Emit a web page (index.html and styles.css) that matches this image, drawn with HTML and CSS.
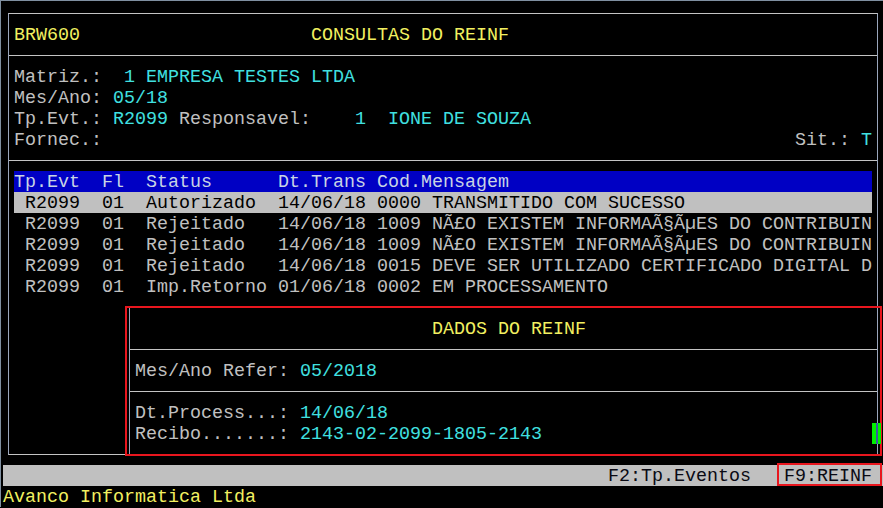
FILE: index.html
```html
<!DOCTYPE html>
<html lang="pt">
<head>
<meta charset="utf-8">
<title>BRW600 - Consultas do REINF</title>
<link rel="stylesheet" href="styles.css">
</head>
<body>
<div class="window">
  <div class="screen">
    <div class="box">
      <div class="ln"><span class="y">BRW600</span>                     <span class="y">CONSULTAS DO REINF</span></div>
      <div class="sep"></div>
      <div class="ln">Matriz.:  <span class="c">1 EMPRESA TESTES LTDA</span></div>
      <div class="ln">Mes/Ano: <span class="c">05/18</span></div>
      <div class="ln">Tp.Evt.: <span class="c">R2099</span> Responsavel:    <span class="c">1  IONE DE SOUZA</span></div>
      <div class="ln">Fornec.:                                                               Sit.: <span class="c">T</span></div>
      <div class="sep"></div>
      <div class="ln head">Tp.Evt  Fl  Status      Dt.Trans Cod.Mensagem</div>
      <div class="ln sel"> R2099  01  Autorizado  14/06/18 0000 TRANSMITIDO COM SUCESSO</div>
      <div class="ln"> R2099  01  Rejeitado   14/06/18 1009 NÃ£O EXISTEM INFORMAÃ§ÃµES DO CONTRIBUIN</div>
      <div class="ln"> R2099  01  Rejeitado   14/06/18 1009 NÃ£O EXISTEM INFORMAÃ§ÃµES DO CONTRIBUIN</div>
      <div class="ln"> R2099  01  Rejeitado   14/06/18 0015 DEVE SER UTILIZADO CERTIFICADO DIGITAL D</div>
      <div class="ln"> R2099  01  Imp.Retorno 01/06/18 0002 EM PROCESSAMENTO</div>
      <div class="ln"></div>
      <div class="ln"></div>
      <div class="ln"></div>
      <div class="ln"></div>
      <div class="ln"></div>
      <div class="ln"></div>
      <div class="ln"></div>

      <div class="dialog">
        <div class="ln">                           <span class="y">DADOS DO REINF</span></div>
        <div class="sep"></div>
        <div class="ln">Mes/Ano Refer: <span class="c">05/2018</span></div>
        <div class="sep"></div>
        <div class="ln">Dt.Process...: <span class="c">14/06/18</span></div>
        <div class="ln">Recibo.......: <span class="c">2143-02-2099-1805-2143</span></div>
      </div>
    </div>
    <div class="fbar">F2:Tp.Eventos   F9:REINF</div>
    <div class="status"><span class="y">Avanco Informatica Ltda</span></div>

    <div class="mark mark-dialog"></div>
    <div class="mark mark-f9"></div>
    <div class="cursor"></div>
  </div>
</div>
</body>
</html>
```
FILE: styles.css
```css
html, body {
  margin: 0;
  padding: 0;
  background: #000;
  height: 100%;
  overflow: hidden;
}

.window {
  border-top: 1px solid #7f8fa0;
  border-left: 1px solid #7f8fa0;
  padding: 2px 0 0 2px;
  height: 507px;
  box-sizing: border-box;
}

.screen {
  position: relative;
  display: flow-root;
  width: 880px;
  height: 504px;
  font-family: "Liberation Mono", "Courier New", monospace;
  font-size: 18.333px;
  line-height: 21px;
  color: #c0c0c0;
}

.y { color: #f2f060; }
.c { color: #40e0e0; }

.box {
  position: relative;
  margin: 10px 0 10px 5px;
  width: 870px;
  box-sizing: border-box;
  border-top: 1px solid #c4c4c4;
  border-bottom: 1px solid #c4c4c4;
  border-left: 1px solid #9aa6bc;
  border-right: 1px solid #9aa6bc;
  padding: 10px 0;
}

.ln {
  height: 21px;
  box-sizing: border-box;
  padding-top: 1px;
  margin: 0 5px;
  white-space: pre;
}

.sep {
  height: 21px;
  background: linear-gradient(to bottom, transparent 10px, #c4c4c4 10px, #c4c4c4 11px, transparent 11px);
}

.head {
  background: #0000c4;
  color: #c8d4e4;
}

.sel {
  background: #c0c0c0;
  color: #000;
}

.dialog {
  position: absolute;
  left: 120px;
  top: 293px;
  right: -1px;
  bottom: -1px;
  background: #000;
  border-top: 1px solid #c4c4c4;
  border-bottom: 1px solid #c4c4c4;
  border-left: 1px solid #9aa6bc;
  border-right: 1px solid #9aa6bc;
  padding: 10px 0;
}

.fbar {
  height: 21px;
  box-sizing: border-box;
  padding-top: 1px;
  background: #c0c0c0;
  color: #0a0a14;
  text-align: right;
  padding-right: 11px;
  white-space: pre;
}

.status {
  height: 21px;
  box-sizing: border-box;
  padding-top: 1px;
  white-space: pre;
}

.mark {
  position: absolute;
  box-sizing: border-box;
  border: 2px solid #e8161e;
}

.mark-dialog {
  left: 122px;
  top: 303px;
  width: 757px;
  height: 150px;
}

.mark-f9 {
  left: 774px;
  top: 460px;
  width: 105px;
  height: 23px;
}

.cursor {
  position: absolute;
  left: 869px;
  top: 420px;
  width: 9px;
  height: 21px;
  background: linear-gradient(to right, #00f000 0, #00f000 4px, #3a5aa0 4px, #3a5aa0 6px, #00f000 6px, #00f000 9px);
}
```
